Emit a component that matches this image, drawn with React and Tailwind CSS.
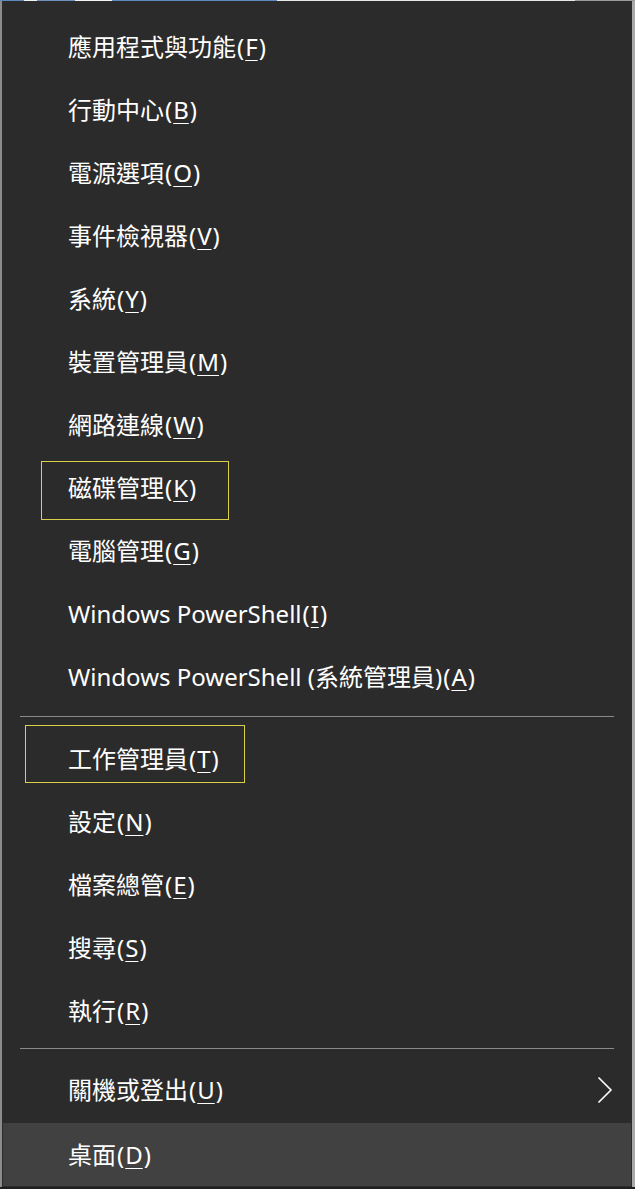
import React from "react";

const groupOne = [
  ["應用程式與功能", "F"],
  ["行動中心", "B"],
  ["電源選項", "O"],
  ["事件檢視器", "V"],
  ["系統", "Y"],
  ["裝置管理員", "M"],
  ["網路連線", "W"],
  ["磁碟管理", "K"],
  ["電腦管理", "G"],
  ["Windows PowerShell", "I"],
  ["Windows PowerShell (系統管理員)", "A"],
];

const groupTwo = [
  ["工作管理員", "T"],
  ["設定", "N"],
  ["檔案總管", "E"],
  ["搜尋", "S"],
  ["執行", "R"],
];

const MenuItem = ({ label, hotkey, active, submenu }) => (
  <div
    className={
      "mx-px h-[63px] flex items-center justify-between pl-[65px] pr-[18px] " +
      (active ? "bg-[#414141]" : "")
    }
  >
    <span className="text-[24px] leading-none text-white">
      {label}<span className="mx-[1px]">(</span><span className="underline underline-offset-[4px] decoration-1">{hotkey}</span><span className="ml-[1px]">)</span>
    </span>
    {submenu && (
      <svg width="16" height="28" viewBox="0 0 16 28" fill="none">
        <path d="M1.5 1.5 L14 14 L1.5 26.5" stroke="#ffffff" strokeWidth="1.6" />
      </svg>
    )}
  </div>
);

const Separator = ({ h, top }) => (
  <div className={h}>
    <div className={"mx-[18px] h-px bg-[#8a8a8a] " + top} />
  </div>
);

export default function App() {
  return (
    <div className="relative w-[635px] h-[1189px] overflow-hidden bg-[#b4b4b4] flex flex-col font-['Noto_Sans','Noto_Sans_CJK_TC',sans-serif]">
      {/* bits of the window behind the menu */}
      <div className="h-px flex shrink-0">
        <div className="w-[24px] bg-[#5d89bd]" />
        <div className="w-[13px] bg-[#f2f2f2]" />
        <div className="w-[38px] bg-[#6d92bd]" />
        <div className="w-[37px] bg-[#f4f4f4]" />
        <div className="w-[165px] bg-[#5f8ac0]" />
        <div className="flex-1 bg-[#e6e6e6]" />
        <div className="w-[60px] bg-[#9a9a9a]" />
      </div>

      <div className="flex flex-1">
        <div className="w-[2px] bg-[#8c8c8c]" />
        <div className="flex-1 bg-[#2b2b2b] pt-[14px] flex flex-col">
          {groupOne.map(([label, key]) => (
            <MenuItem key={label} label={label} hotkey={key} />
          ))}
          <Separator h="h-[19px]" top="mt-[8px]" />
          {groupTwo.map(([label, key]) => (
            <MenuItem key={label} label={label} hotkey={key} />
          ))}
          <Separator h="h-[16px]" top="mt-[6px]" />
          <MenuItem label="關機或登出" hotkey="U" submenu />
          <div className="h-[2px]" />
          <MenuItem label="桌面" hotkey="D" active />
        </div>
        <div className="w-[3px] bg-[#a9a9a9]" />
      </div>
      <div className="h-[2px] bg-[#1f1f1f] shrink-0" />

      {/* highlight annotations */}
      <div className="absolute left-[41px] top-[461px] w-[188px] h-[59px] border border-[#dccf4a]" />
      <div className="absolute left-[25px] top-[725px] w-[220px] h-[58px] border border-[#dccf4a]" />
    </div>
  );
}
